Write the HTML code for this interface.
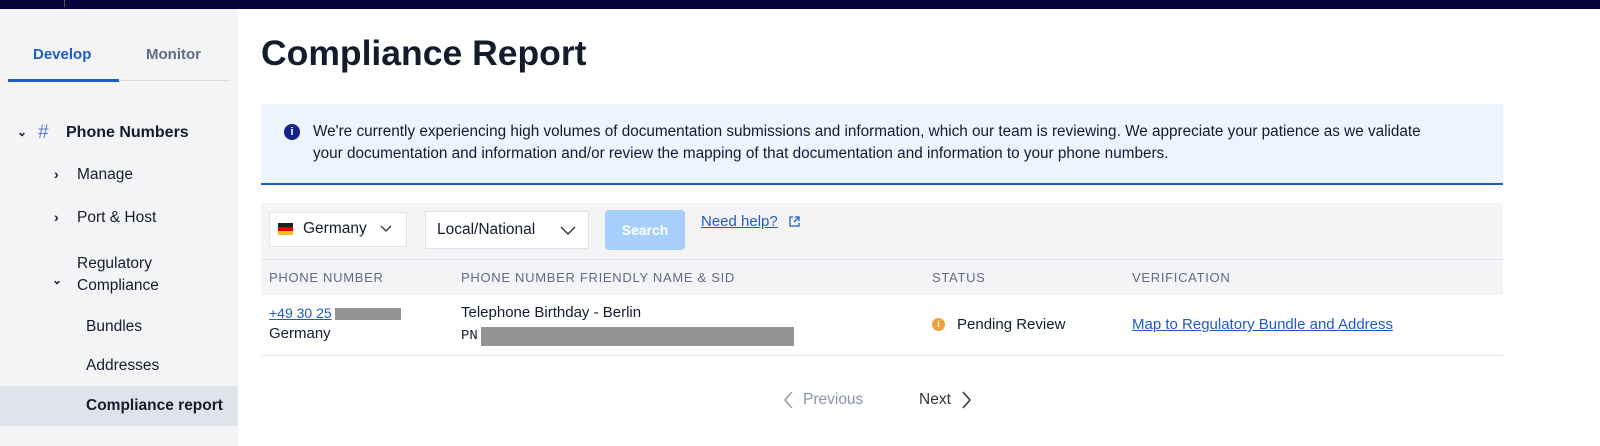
<!DOCTYPE html>
<html><head><style>
*{margin:0;padding:0;box-sizing:border-box}
body{width:1600px;height:446px;overflow:hidden;background:#fff;font-family:"Liberation Sans",sans-serif;color:#121c2d;position:relative}
.top{position:absolute;left:0;top:0;width:1600px;height:9px;background:#06033a}
.top i{position:absolute;left:64px;top:0;width:1px;height:7px;background:#555}
.side{position:absolute;left:0;top:9px;width:238px;height:437px;background:#f4f4f6}
.a{position:absolute;white-space:nowrap}
</style></head><body>
<div class="top"><i></i></div>
<div class="side">
<div class="a" style="left:33px;top:37px;font-size:15px;font-weight:bold;color:#1f5bc6">Develop</div>
<div class="a" style="left:146px;top:37px;font-size:15px;font-weight:bold;color:#606b85">Monitor</div>
<div class="a" style="left:8px;top:70px;width:111px;height:3px;background:#1f5bc6"></div>
<div class="a" style="left:119px;top:71px;width:111px;height:1px;background:#ddd"></div>
<div class="a" style="left:17px;top:116px;font-size:12px;font-weight:bold">&#8964;</div>
<div class="a" style="left:38px;top:113px;font-size:19px;color:#5b7fd0">#</div>
<div class="a" style="left:66px;top:115px;font-size:16px;font-weight:bold">Phone Numbers</div>
<div class="a" style="left:54px;top:157px;font-size:14px;font-weight:bold">›</div>
<div class="a" style="left:77px;top:157px;font-size:15.5px">Manage</div>
<div class="a" style="left:54px;top:200px;font-size:14px;font-weight:bold">›</div>
<div class="a" style="left:77px;top:200px;font-size:15.5px">Port &amp; Host</div>
<div class="a" style="left:52px;top:264px;font-size:12px;font-weight:bold">&#8964;</div>
<div class="a" style="left:77px;top:244px;font-size:15.5px;line-height:22px">Regulatory<br>Compliance</div>
<div class="a" style="left:86px;top:309px;font-size:15.5px">Bundles</div>
<div class="a" style="left:86px;top:348px;font-size:15.5px">Addresses</div>
<div class="a" style="left:0;top:377px;width:238px;height:40px;background:#e1e3ea"></div>
<div class="a" style="left:86px;top:388px;font-size:15.5px;font-weight:bold">Compliance report</div>
</div>
<div class="a" style="left:261px;top:33px;font-size:35.5px;font-weight:bold">Compliance Report</div>
<div class="a" style="left:261px;top:104px;width:1242px;height:81px;background:#ebf4ff;border-bottom:2px solid #1f5bc6"></div>
<div class="a" style="left:284px;top:124px;width:16px;height:16px;border-radius:50%;background:#14228a;color:#fff;font-size:11px;font-weight:bold;text-align:center;line-height:16px">i</div>
<div class="a" style="left:313px;top:121px;font-size:15.3px;line-height:22px">We're currently experiencing high volumes of documentation submissions and information, which our team is reviewing. We appreciate your patience as we validate<br>your documentation and information and/or review the mapping of that documentation and information to your phone numbers.</div>
<div class="a" style="left:261px;top:203px;width:1242px;height:57px;background:#f4f4f6"></div>
<div class="a" style="left:261px;top:259px;width:1242px;height:36px;background:#f4f4f6;border-top:1px solid #e1e3ea"></div>
<div class="a" style="left:269px;top:212px;width:138px;height:35px;background:#fff;border:1px solid #e1e3ea"></div>
<div class="a" style="left:278px;top:223px;width:15px;height:4px;background:#222"></div>
<div class="a" style="left:278px;top:227px;width:15px;height:4px;background:#d00"></div>
<div class="a" style="left:278px;top:231px;width:15px;height:4px;background:#f4c020"></div>
<div class="a" style="left:303px;top:220px;font-size:15.5px">Germany</div>
<svg class="a" style="left:379px;top:224px" width="14" height="10"><path d="M2 2l5 5 5-5" fill="none" stroke="#333" stroke-width="1.3"/></svg>
<div class="a" style="left:425px;top:211px;width:164px;height:38px;background:#fff;border:1px solid #e1e3ea"></div>
<div class="a" style="left:437px;top:221px;font-size:15.5px">Local/National</div>
<svg class="a" style="left:559px;top:225px" width="18" height="12"><path d="M2 2l7 7 7-7" fill="none" stroke="#333" stroke-width="1.4"/></svg>
<div class="a" style="left:605px;top:210px;width:80px;height:40px;background:#a6d0fb;border-radius:4px;color:#fff;font-weight:bold;font-size:14px;text-align:center;line-height:40px">Search</div>
<div class="a" style="left:701px;top:213px;font-size:15px;color:#1f5bc6;text-decoration:underline">Need help?</div>
<svg class="a" style="left:788px;top:215px" width="13" height="13"><path d="M5 2H2v9h9V8M7 2h4v4M11 2L6 7" fill="none" stroke="#1f5bc6" stroke-width="1.3"/></svg>
<div class="a" style="left:269px;top:270px;font-size:13px;letter-spacing:.7px;color:#606b85">PHONE NUMBER</div>
<div class="a" style="left:461px;top:270px;font-size:13px;letter-spacing:.7px;color:#606b85">PHONE NUMBER FRIENDLY NAME &amp; SID</div>
<div class="a" style="left:932px;top:270px;font-size:13px;letter-spacing:.7px;color:#606b85">STATUS</div>
<div class="a" style="left:1132px;top:270px;font-size:13px;letter-spacing:.7px;color:#606b85">VERIFICATION</div>
<div class="a" style="left:269px;top:305px;font-size:14px;color:#1f5bc6;text-decoration:underline">+49 30 25</div>
<div class="a" style="left:335px;top:308px;width:66px;height:12px;background:#949494"></div>
<div class="a" style="left:269px;top:325px;font-size:15px">Germany</div>
<div class="a" style="left:461px;top:304px;font-size:15px">Telephone Birthday - Berlin</div>
<div class="a" style="left:461px;top:328px;font-size:14px;font-family:'Liberation Mono',monospace">PN</div>
<div class="a" style="left:481px;top:327px;width:313px;height:19px;background:#949494"></div>
<div class="a" style="left:932px;top:318px;width:13px;height:13px;border-radius:50%;background:#f0a03a;color:#fff;font-size:9px;font-weight:bold;text-align:center;line-height:13px">i</div>
<div class="a" style="left:957px;top:316px;font-size:15px">Pending Review</div>
<div class="a" style="left:1132px;top:316px;font-size:15px;color:#1f5bc6;text-decoration:underline">Map to Regulatory Bundle and Address</div>
<div class="a" style="left:261px;top:355px;width:1242px;height:1px;background:#e1e3ea"></div>
<svg class="a" style="left:782px;top:390px" width="12" height="20"><path d="M10 2L3 10l7 8" fill="none" stroke="#999" stroke-width="1.5"/></svg>
<div class="a" style="left:803px;top:391px;font-size:15.5px;color:#8891aa">Previous</div>
<div class="a" style="left:919px;top:391px;font-size:15.5px;color:#333">Next</div>
<svg class="a" style="left:961px;top:390px" width="12" height="20"><path d="M2 2l7 8-7 8" fill="none" stroke="#333" stroke-width="1.5"/></svg>
</body></html>
